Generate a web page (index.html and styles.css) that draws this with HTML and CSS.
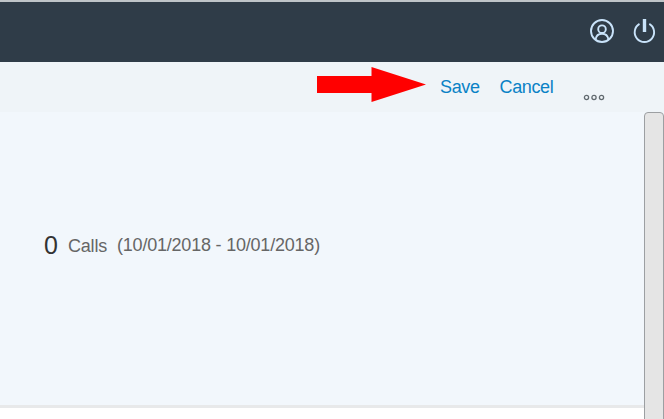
FILE: index.html
```html
<!DOCTYPE html>
<html lang="en">
<head>
<meta charset="utf-8">
<title>Calls</title>
<link rel="stylesheet" href="styles.css">
</head>
<body>
<header class="shell">
  <svg class="icon user" width="26" height="26" viewBox="0 0 26 26"><circle cx="13" cy="13" r="11"/><circle cx="13" cy="11.200" r="3.800"/><path d="M6.500 21.500C7.200 17.600 9.200 15.800 13 15.800S18.800 17.600 19.500 21.500"/></svg>
  <svg class="icon power" width="26" height="26" viewBox="0 0 26 26"><path d="M8.500 5.900A9.700 9.700 0 1 0 18.300 5.900"/><path class="bar" d="M13.500 1V14"/></svg>
</header>
<div class="toolbar">
  <svg class="arrow" width="110" height="36" viewBox="0 0 110 36"><path d="M0 9H54.500V0L109 17.500L54.500 35V26H0Z"/></svg>
  <a class="action save">Save</a>
  <a class="action cancel">Cancel</a>
  <svg class="more" width="22" height="8" viewBox="0 0 22 8"><circle cx="3.500" cy="3.500" r="2.100"/><circle cx="11" cy="3.500" r="2.100"/><circle cx="18.500" cy="3.500" r="2.100"/></svg>
</div>
<div class="body">
  <main class="content">
    <section class="summary">
      <span class="count">0</span>
      <span class="label">Calls</span>
      <span class="range">(10/01/2018 - 10/01/2018)</span>
    </section>
  </main>
  <div class="scroll"><div class="thumb"></div></div>
</div>
</body>
</html>
```
FILE: styles.css
```css
* { box-sizing: border-box; }
body {
  margin: 0;
  width: 664px;
  height: 419px;
  overflow: hidden;
  display: flex;
  flex-direction: column;
  background: #f2f7fc;
  font-family: "Liberation Sans", Arial, sans-serif;
  font-size: 18px;
}
.shell {
  flex: none;
  height: 62px;
  border-top: 2px solid #bfc4c8;
  background: #2f3c48;
  display: flex;
  justify-content: flex-end;
  align-items: flex-start;
  gap: 16px;
  padding: 16px 7px 0 0;
}
.icon {
  fill: none;
  stroke: #c9e3fa;
  stroke-width: 1.9;
}
.bar { stroke-width: 3.4; }
.toolbar {
  flex: none;
  height: 50px;
  background: #eff4f8;
  display: flex;
  align-items: flex-start;
  padding-left: 317px;
}
.arrow { margin-top: 5px; fill: #f00; }
.action {
  margin-top: 15px;
  line-height: 20px;
  letter-spacing: -0.35px;
  color: #0a82c6;
}
.save { width: 59.5px; margin-left: 13px; }
.cancel { width: 83.5px; }
.more {
  margin-top: 32px;
  fill: none;
  stroke: #626a70;
  stroke-width: 1.3;
}
.body {
  flex: 1;
  display: flex;
  min-height: 0;
  background: #fff;
}
.content {
  width: 644px;
  height: 296px;
  background: #f2f7fc;
  border-bottom: 3px solid #e8e9ea;
}
.summary {
  display: flex;
  align-items: flex-start;
  padding: 119px 0 0 44px;
  line-height: 28px;
  color: #666;
  white-space: nowrap;
}
.count { width: 24px; font-size: 25px; color: #333; }
.label { width: 49px; padding-top: 1px; letter-spacing: -0.2px; }
.range { letter-spacing: -0.21px; }
.scroll {
  width: 20px;
  background: #f2f7fc;
}
.thumb {
  height: 320px;
  border: 1px solid #9c9fa2;
  border-radius: 4px;
  background: #e5e5e5;
}
```
